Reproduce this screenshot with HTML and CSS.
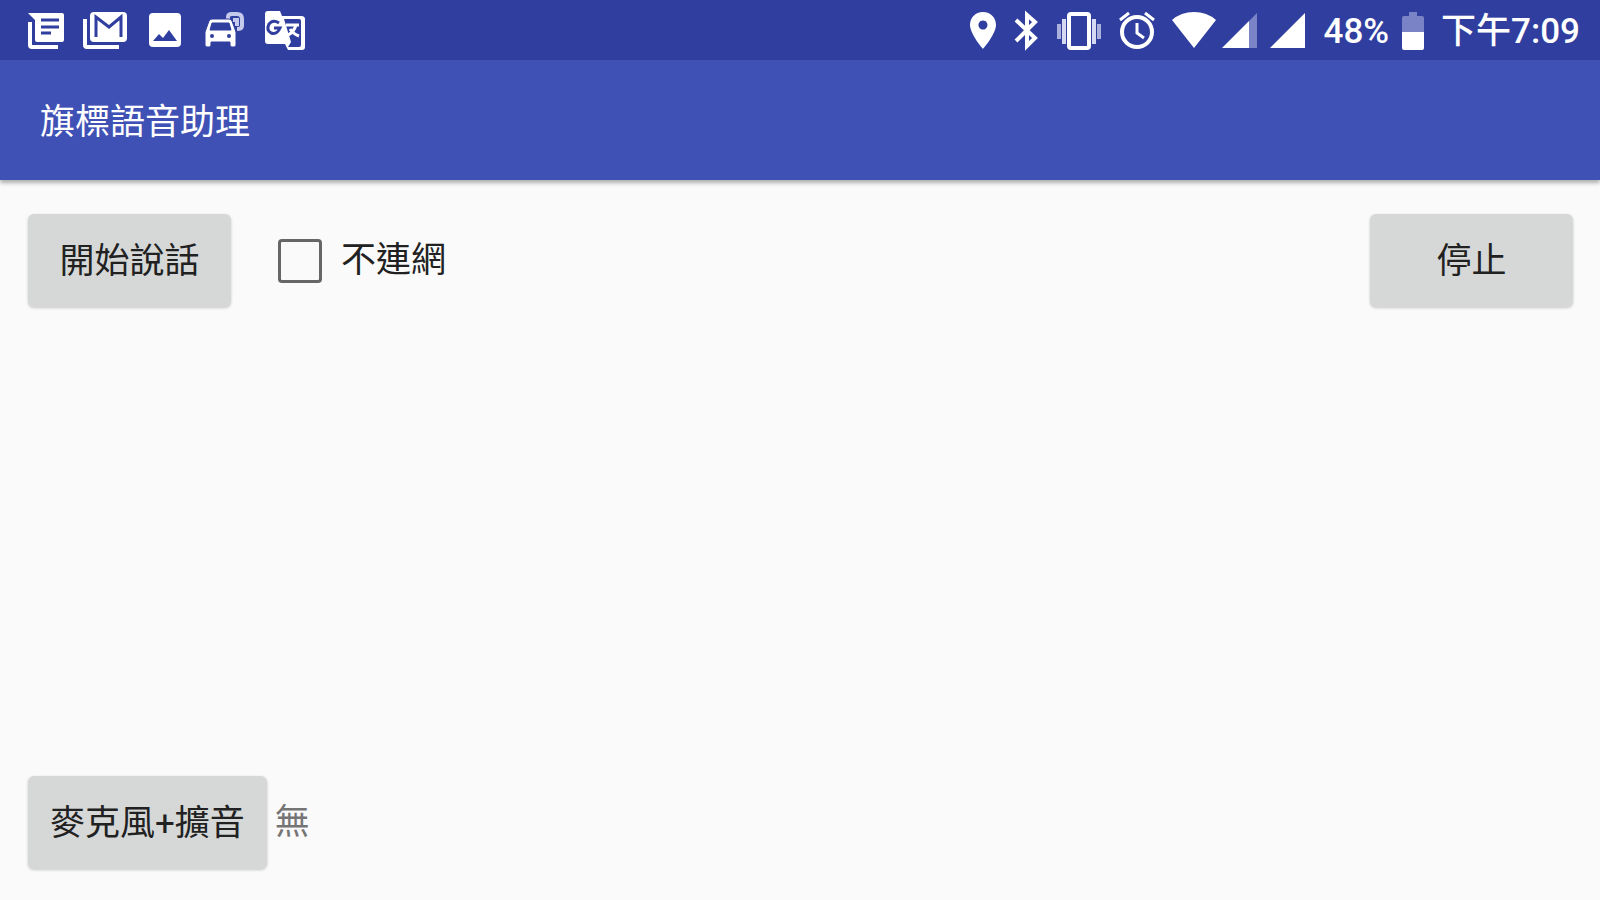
FILE: index.html
```
<!DOCTYPE html>
<html lang="zh-Hant">
<head>
    <meta charset="UTF-8">
    <meta name="viewport" content="width=device-width, initial-scale=1.0">
    <title>旗標語音助理</title>
    <link rel="stylesheet" href="styles.css">
</head>
<body>

    <div class="status-bar">
        <div class="notifications">
            <!-- news -->
            <svg width="38" height="44" viewBox="0 0 38 44">
                <path fill="#fff" d="M0 5h34q2 0 2 2v25q0 2-2 2H9q-2 0-2-2V12z"/>
                <path fill="none" stroke="#fff" stroke-width="4" d="M2 14v23q0 2 2 2h26"/>
                <path stroke="#303f9f" stroke-width="3" d="M13 12h18M13 19h18M13 25h10"/>
            </svg>
            <!-- mail -->
            <svg width="46" height="44" viewBox="0 0 46 44">
                <rect x="8" y="4" width="37" height="30" rx="4" fill="#fff"/>
                <path fill="none" stroke="#fff" stroke-width="4" d="M3 11v26q0 2 2 2h32"/>
                <path fill="none" stroke="#303f9f" stroke-width="3" d="M14 29V9l13 10L39 9v20"/>
            </svg>
            <!-- picture -->
            <svg width="38" height="44" viewBox="-4 0 38 44">
                <rect x="1" y="5" width="32" height="34" rx="4" fill="#fff"/>
                <path fill="#303f9f" d="M5 33l6-7 4 4 6-8 8 11z"/>
            </svg>
            <!-- car -->
            <svg width="47" height="44" viewBox="-5 0 47 44">
                <path fill="none" stroke="#c5caec" stroke-width="4" d="M25 13V9q0-3 4-3h5q5 0 5 5v7q0 3-5 3M30 12h4v6"/>
                <path fill="#fff" stroke="#303f9f" stroke-width="1" fill-rule="evenodd" d="M6 13q1-2 3-2h17q2 0 3 2l4 11v13q0 2-2 2h-2q-2 0-2-2v-3H8v3q0 2-2 2H4q-2 0-2-2V24zM9 15L7 22h21l-2-7z"/>
                <circle cx="9" cy="28" r="2" fill="#303f9f"/>
                <circle cx="26" cy="28" r="2" fill="#303f9f"/>
            </svg>
            <!-- translate -->
            <svg width="47" height="44" viewBox="-3 0 47 44">
                <path fill="#fff" d="M4 3h12l2 5h19q4 0 4 3v28q0 3-3 3H24l-3-6H4q-3 0-3-3V6q0-3 3-3z"/>
                <path fill="#303f9f" d="M20 11h15q2 0 2 2v24q0 2-2 2H24l3-5z"/>
                <path fill="none" stroke="#303f9f" stroke-width="3" d="M15 15q-6-4-10 1-3 6 2 9 6 2 9-5h-6"/>
                <path fill="none" stroke="#fff" stroke-width="3" d="M22 17h13M32 17q-2 7-8 10M26 21q3 5 9 7"/>
            </svg>
        </div>

        <div class="system">
            <!-- location -->
            <svg width="28" height="44" viewBox="-1 0 28 44">
                <path fill="#fff" fill-rule="evenodd" d="M14 4C6 4 1 10 1 17c0 9 13 24 13 24s13-15 13-24C27 10 22 4 14 4zm0 8.500a4.500 4.500 0 1 1-.1 0z"/>
            </svg>
            <!-- bluetooth -->
            <svg width="26" height="44" viewBox="-2 0 26 44">
                <path fill="none" stroke="#fff" stroke-width="4" d="M2 12l19 18-8 8V7l8 7L2 33"/>
            </svg>
            <!-- vibrate -->
            <svg width="48" height="44" viewBox="-1 0 48 44">
                <rect x="14" y="6" width="20" height="34" rx="2" fill="none" stroke="#fff" stroke-width="4"/>
                <path stroke="#d5d9f1" stroke-width="4" d="M9 11v25M39 11v25"/>
                <path stroke="#a9b0dc" stroke-width="4" d="M4 16v15M44 16v15"/>
            </svg>
            <!-- alarm -->
            <svg width="38" height="44" viewBox="0 0 38 44">
                <circle cx="19" cy="24" r="15" fill="none" stroke="#fff" stroke-width="4"/>
                <path fill="none" stroke="#fff" stroke-width="3" d="M19 15v10l7 5M2 12l9-7M36 12l-9-7"/>
            </svg>
            <!-- wifi and signal -->
            <svg width="134" height="44" viewBox="0 0 134 44">
                <path fill="#fff" d="M0 12Q9 4 22 4t22 8L22 40z"/>
                <path fill="#fff" d="M50 40l27-27v27z"/>
                <path fill="#7983c5" d="M77 13l8-8v35h-8z"/>
                <path fill="#fff" d="M98 40l35-35v35z"/>
            </svg>
            <span class="percent">48%</span>
            <!-- battery -->
            <svg width="24" height="44" viewBox="0 0 24 44">
                <path fill="#7983c5" d="M8 4h8v4h5q2 0 2 2v14H1V10q0-2 2-2h5z"/>
                <path fill="#fff" d="M1 24h22v16q0 2-2 2H3q-2 0-2-2z"/>
            </svg>
            <span class="clock">下午7:09</span>
        </div>
    </div>

    <header class="app-bar">
        <h1>旗標語音助理</h1>
    </header>

    <main>
        <div class="row">
            <button type="button" class="btn">開始說話</button>
            <label class="offline">
                <input type="checkbox">
                不連網
            </label>
            <button type="button" class="btn stop">停止</button>
        </div>
        <div class="row">
            <button type="button" class="btn">麥克風+擴音</button>
            <span class="result">無</span>
        </div>
    </main>

</body>
</html>
```

FILE: styles.css
```
* {
    box-sizing: border-box;
}
body {
    display: flex;
    flex-direction: column;
    min-height: 100vh;
    margin: 0;
    background-color: #fafafa;
    color: #212121;
    font-family: Roboto, "Noto Sans CJK TC", sans-serif;
    font-size: 35px;
    line-height: 48px;
}
svg {
    display: block;
    flex: none;
}
/* Status bar */
.status-bar {
    display: flex;
    justify-content: space-between;
    align-items: center;
    height: 60px;
    padding: 0 20px 0 28px;
    background-color: #303f9f;
    color: #fff;
    font-weight: 500;
}
.notifications {
    display: flex;
    align-items: center;
    gap: 16px;
}
.system {
    display: flex;
    align-items: center;
    gap: 16px;
    white-space: nowrap;
}
.percent,
.clock {
    padding-top: 4px;
}
.percent {
    margin-left: 2px;
    margin-right: -4px;
}
/* Title bar */
.app-bar {
    display: flex;
    align-items: center;
    height: 120px;
    padding: 6px 40px 0;
    background-color: #3f51b5;
    color: #fff;
    box-shadow: 0 3px 4px rgba(0, 0, 0, 0.3);
}
.app-bar h1 {
    margin: 0;
    font-size: 35px;
    font-weight: 400;
}
/* Controls at the top and bottom of the screen */
main {
    display: flex;
    flex: 1;
    flex-direction: column;
    justify-content: space-between;
    padding: 34px 27px 31px 28px;
}
.row {
    display: flex;
    align-items: center;
}
.btn {
    min-width: 203px;
    height: 93px;
    padding: 2px 22px 0;
    border: 0;
    border-radius: 6px;
    background-color: #d6d8d7;
    box-shadow: 0 1px 3px rgba(0, 0, 0, 0.2);
    color: #212121;
    font: inherit;
}
.stop {
    margin-left: auto;
}
.offline {
    display: flex;
    align-items: center;
    gap: 19px;
    margin-left: 47px;
}
.offline input {
    appearance: none;
    width: 44px;
    height: 44px;
    margin: 0;
    border: 3px solid #666;
    border-radius: 4px;
}
.offline input:checked {
    background-color: #ff4081;
    border-color: #ff4081;
}
.result {
    margin-left: 8px;
    color: #757575;
}
```
